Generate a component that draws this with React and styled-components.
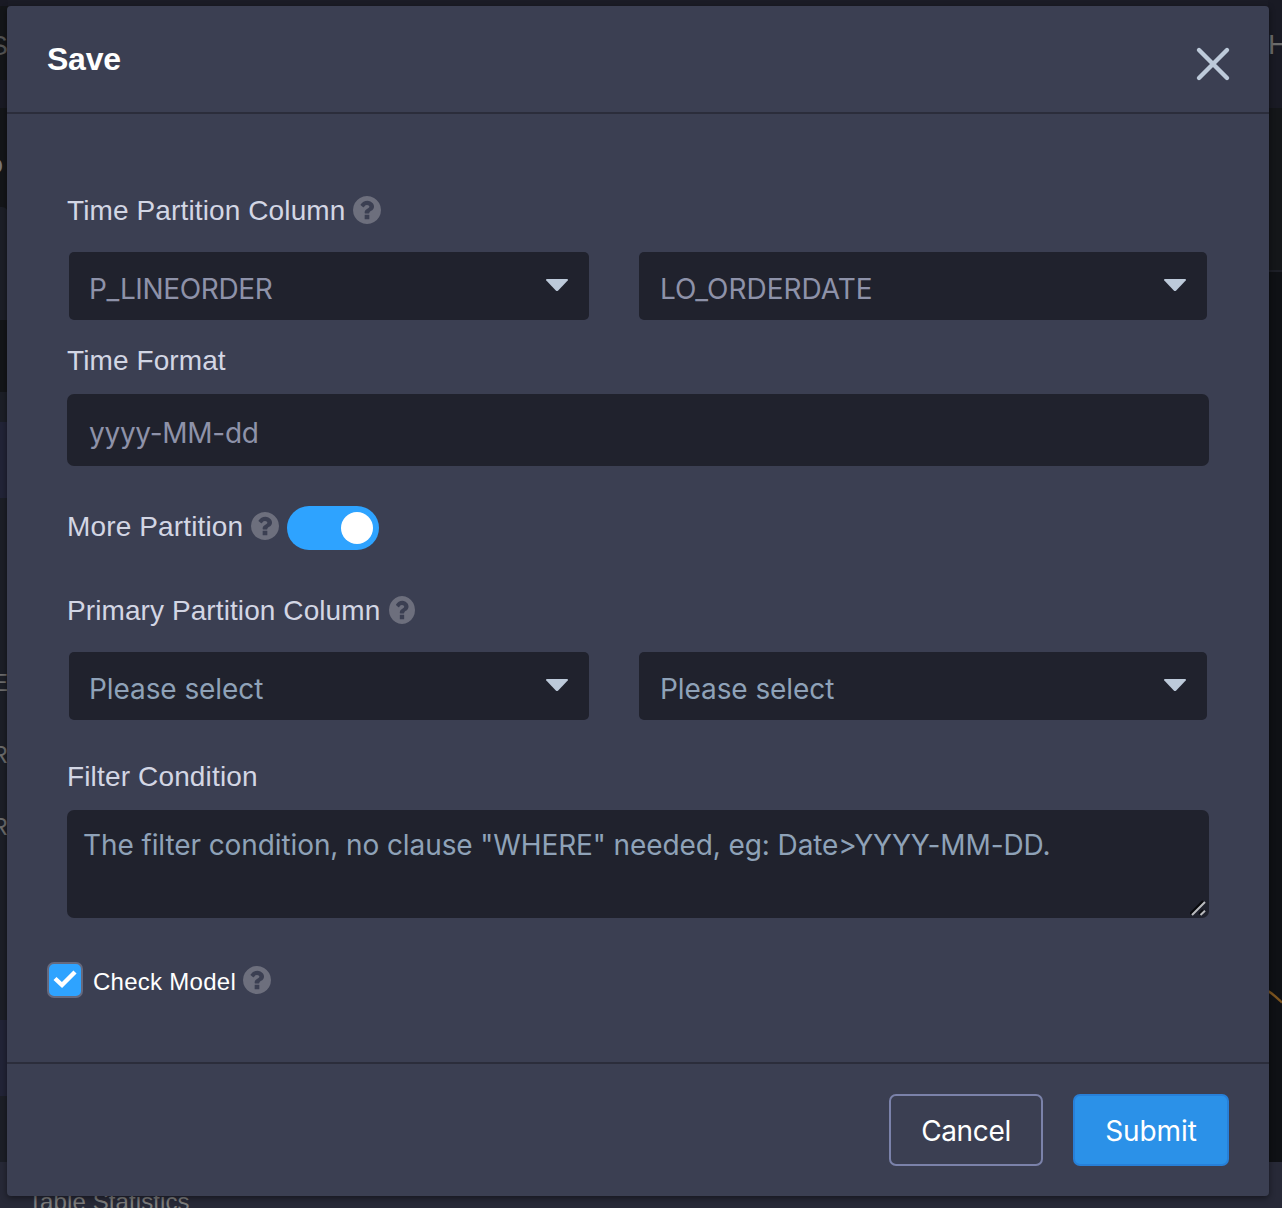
import React from "react";
import styled, { createGlobalStyle } from "styled-components";

const Global = createGlobalStyle`
  *, *::before, *::after { box-sizing: border-box; }
  body { margin: 0; background: #14161a; overflow: hidden; }
  button, input, textarea { font: inherit; margin: 0; }
`;

const sans = `"Liberation Sans", Helvetica, Arial, sans-serif`;
const ui = `Inter, "Noto Sans", sans-serif`;

const Screen = styled.div`
  position: relative;
  width: 1282px;
  height: 1208px;
  overflow: hidden;
  display: flex;
  flex-direction: column;
  background: #1b1c26;
  font-family: ${sans};
`;

const Workspace = styled.div`
  height: 1162px;
  display: flex;
  justify-content: space-between;
`;

const Rail = styled.div`
  width: ${(p) => p.$width}px;
  display: flex;
  flex-direction: column;
  overflow: hidden;
  background: #141619;
`;

const Band = styled.div`
  flex: 0 0 ${(p) => p.$h}px;
  height: ${(p) => p.$h}px;
  background: ${(p) => p.$bg};
  border-top-right-radius: ${(p) => p.$radius || 0}px;
  display: flex;
  align-items: center;
  justify-content: ${(p) => p.$align || "flex-end"};
  padding-top: ${(p) => p.$drop || 0}px;
  padding-right: ${(p) => p.$inset || 0}px;
  overflow: hidden;
  color: ${(p) => p.$color || "#6c6c6c"};
  font-size: ${(p) => p.$size || 28}px;
  line-height: 1;
  white-space: nowrap;
`;

const StatusBar = styled.div`
  height: 46px;
  background: #272937;
  padding: 26px 0 0 28px;
  color: #7d7d7d;
  font-size: 24px;
  line-height: 28px;
  letter-spacing: 0.1px;
`;

const Dialog = styled.section`
  position: absolute;
  left: 7px;
  top: 6px;
  width: 1262px;
  height: 1190px;
  display: flex;
  flex-direction: column;
  background: #3b3f52;
  border-radius: 4px;
  box-shadow: 0 2px 6px rgba(0, 0, 0, 0.45);
`;

const Header = styled.header`
  flex: 0 0 108px;
  display: flex;
  justify-content: space-between;
  align-items: flex-start;
  padding: 33px 38px 0 40px;
  border-bottom: 2px solid #2b2d3b;
`;

const Title = styled.h1`
  margin: 0;
  color: #fff;
  font: bold 32px/40px ${sans};
  letter-spacing: -0.25px;
`;

const CloseButton = styled.button`
  display: flex;
  padding: 7px 0 0;
  border: 0;
  background: none;
`;

const Body = styled.main`
  flex: 1;
  display: flex;
  flex-direction: column;
  padding: 80px 60px 0;
`;

const LabelRow = styled.div`
  display: flex;
  align-items: center;
  gap: ${(p) => p.$gap || 8}px;
  height: ${(p) => p.$h || 34}px;
  margin-top: ${(p) => p.$mt || 0}px;
`;

const Label = styled.span`
  color: #d3d6e4;
  font-size: 28px;
  line-height: 34px;
  white-space: nowrap;
  letter-spacing: ${(p) => p.$ls || 0.1}px;
`;

const HelpIcon = styled.svg`
  display: block;
  flex: none;
  margin-top: ${(p) => p.$shift ?? -2}px;
`;

const SelectRow = styled.div`
  display: grid;
  grid-template-columns: 520px 568px;
  column-gap: 50px;
  padding-left: 2px;
  margin-top: ${(p) => p.$mt}px;
`;

const Select = styled.div`
  height: 68px;
  display: flex;
  align-items: center;
  justify-content: space-between;
  padding: 6px 20px 0 ${(p) => p.$pl || 20}px;
  border-radius: 5px;
  background: #20222d;
  color: ${(p) => (p.$placeholder ? "#8fa2b8" : "#8e92a9")};
  font: 28px/36px ${ui};
`;

const Value = styled.span`
  letter-spacing: ${(p) => p.$ls || 0}px;
`;

const CaretIcon = styled.svg`
  display: block;
  margin-top: -8px;
`;

const FormatInput = styled.input`
  height: 72px;
  margin-top: 16px;
  padding: 5px 22px 0;
  border: 0;
  border-radius: 7px;
  outline: 0;
  background: #20222d;
  color: #8e92a9;
  &&& { font: 28px/36px ${ui}; }
  letter-spacing: -0.28px;
`;

const FilterBox = styled.div`
  position: relative;
  height: 108px;
  margin-top: 16px;
  display: flex;
`;

const FilterInput = styled.textarea`
  flex: 1;
  padding: 17px 16px;
  border: 0;
  border-radius: 7px;
  outline: 0;
  resize: none;
  overflow: hidden;
  background: #20222d;
  &&& { font: 28px/36px ${ui}; }
  letter-spacing: -0.1px;
  &::placeholder { color: #8fa2b8; opacity: 1; }
`;

const Grip = styled.svg`
  position: absolute;
  right: 3px;
  bottom: 1px;
`;

const Switch = styled.span`
  width: 92px;
  height: 44px;
  padding: 6px;
  margin-top: 2px;
  border-radius: 22px;
  background: #2ea3ff;
  display: flex;
  justify-content: flex-end;
`;

const Knob = styled.span`
  width: 32px;
  height: 32px;
  border-radius: 50%;
  background: #fff;
`;

const CheckRow = styled.div`
  display: flex;
  align-items: center;
  height: 36px;
  margin: 44px 0 0 -20px;
`;

const CheckBox = styled.span`
  width: 36px;
  height: 36px;
  display: flex;
  align-items: center;
  justify-content: center;
  border: 2px solid #65697e;
  border-radius: 7px;
  background: #2ea3ff;
`;

const CheckLabel = styled.span`
  margin: 4px 7px 0 10px;
  color: #fff;
  font-size: 24px;
  line-height: 30px;
  letter-spacing: 0.27px;
`;

const Footer = styled.footer`
  flex: 0 0 134px;
  display: flex;
  justify-content: flex-end;
  align-items: flex-start;
  gap: 30px;
  padding: 30px 40px 0;
  border-top: 2px solid #2b2d3b;
`;

const Button = styled.button`
  width: ${(p) => p.$w}px;
  height: 72px;
  padding: 2px 0 0;
  border: 2px solid ${(p) => (p.$primary ? "#2780d9" : "#7b82aa")};
  border-radius: 7px;
  background: ${(p) => (p.$primary ? "#2b91e8" : "transparent")};
  color: #fff;
  &&& { font: 28px/36px ${ui}; }
  letter-spacing: ${(p) => p.$ls || 0}px;
`;

const Help = ({ width = 28, shift }) => (
  <HelpIcon $shift={shift} width={width} height="28" viewBox="128 128 1536 1536" preserveAspectRatio="none">
    <path
      fill="#6d6f7d"
      d="M1024 1376v-192q0-14-9-23t-23-9h-192q-14 0-23 9t-9 23v192q0 14 9 23t23 9h192q14 0 23-9t9-23zm256-672q0-88-55.5-163t-138.5-116-170-41q-243 0-371 213-15 24 8 42l132 100q7 6 19 6 16 0 25-12 53-68 86-92 34-24 86-24 48 0 85.5 26t37.5 59q0 38-20 61t-68 45q-63 28-115.5 86.5t-52.5 125.5v36q0 14 9 23t23 9h192q14 0 23-9t9-23q0-19 21.5-49.5t54.5-49.5q32-18 49-28.5t46-35 44.5-48 28-60.5 12.5-81zm384 192q0 209-103 385.5t-279.5 279.5-385.5 103-385.5-103-279.5-279.5-103-385.5 103-385.5 279.5-279.5 385.5-103 385.5 103 279.5 279.5 103 385.5z"
    />
  </HelpIcon>
);

const Caret = () => (
  <CaretIcon width="24" height="14" viewBox="0 0 24 14">
    <path d="M1.8 1H22.2Q23.6 1 22.7 2.5L13.2 12.5Q12 13.6 10.8 12.5L1.3 2.5Q.4 1 1.8 1Z" fill="#bdcada" />
  </CaretIcon>
);

const leftBands = [
  { h: 6, bg: "#191a24" },
  { h: 74, bg: "#141619", text: "S", drop: 6, size: 28, color: "#555" },
  { h: 28, bg: "#191a24" },
  { h: 99, bg: "#141619", text: "o", drop: 12, inset: 5, size: 26, color: "#777" },
  { h: 113, bg: "#1c1f27", radius: 6 },
  { h: 72, bg: "#141619" },
  { h: 30, bg: "#1c1f27" },
  { h: 76, bg: "#222437" },
  { h: 148, bg: "#1c1f27" },
  { h: 72, bg: "#1c1f27", text: "E", drop: 2 },
  { h: 72, bg: "#1c1f27", text: "R", drop: 2 },
  { h: 72, bg: "#1c1f27", text: "R", drop: 2 },
  { h: 158, bg: "#1c1f27" },
  { h: 76, bg: "#222437" },
  { h: 66, bg: "#1c1f27" },
];

export default function App() {
  return (
    <>
      <Global />
      <Screen>
        <Workspace>
          <Rail $width={8}>
            {leftBands.map((b, i) => (
              <Band key={i} $h={b.h} $bg={b.bg} $size={b.size || 24} $drop={b.drop} $inset={b.inset} $radius={b.radius} $color={b.color}>
                {b.text}
              </Band>
            ))}
          </Rail>
          <Rail $width={14}>
            <Band $h={88} $bg="#191a24" $align="flex-start" $size={28} $drop={1}>H</Band>
            <Band $h={20} $bg="#191a24" />
            <Band $h={162} $bg="#141619" />
            <Band $h={2} $bg="#1d1f27" />
            <Band $h={718} $bg="#0f1115" />
            <Band $h={172} $bg="#0f1115" $align="flex-start">
              <svg width="14" height="172" viewBox="0 0 14 172">
                <path d="M0 1C5 4 9 8 14 12.5" fill="none" stroke="#7d5520" strokeWidth="2.4" />
              </svg>
            </Band>
          </Rail>
        </Workspace>
        <StatusBar>Table Statistics</StatusBar>

        <Dialog>
          <Header>
            <Title>Save</Title>
            <CloseButton aria-label="Close">
              <svg width="36" height="36" viewBox="0 0 36 36">
                <path d="M4 4L32 32M32 4L4 32" stroke="#bdcada" strokeWidth="4.4" strokeLinecap="round" />
              </svg>
            </CloseButton>
          </Header>
          <Body>
            <LabelRow>
              <Label $ls={0.12}>Time Partition Column</Label>
              <Help />
            </LabelRow>
            <SelectRow $mt={24}>
              <Select><Value $ls={-0.36}>P_LINEORDER</Value><Caret /></Select>
              <Select $pl={21}><Value>LO_ORDERDATE</Value><Caret /></Select>
            </SelectRow>
            <LabelRow $mt={24}><Label>Time Format</Label></LabelRow>
            <FormatInput defaultValue="yyyy-MM-dd" />
            <LabelRow $mt={38} $h={46}>
              <Label $ls={0.14}>More Partition</Label>
              <Help />
              <Switch><Knob /></Switch>
            </LabelRow>
            <LabelRow $mt={44} $gap={9}>
              <Label $ls={0.09}>Primary Partition Column</Label>
              <Help width={26} />
            </LabelRow>
            <SelectRow $mt={24}>
              <Select $placeholder><Value $ls={-0.08}>Please select</Value><Caret /></Select>
              <Select $placeholder $pl={21}><Value $ls={-0.08}>Please select</Value><Caret /></Select>
            </SelectRow>
            <LabelRow $mt={40}><Label $ls={0.15}>Filter Condition</Label></LabelRow>
            <FilterBox>
              <FilterInput placeholder={'The filter condition, no clause "WHERE" needed, eg: Date>YYYY-MM-DD.'} />
              <Grip width="16" height="17" viewBox="0 0 16 17">
                <path d="M0 14L13 1M9 14L13 10" stroke="#08090c" strokeWidth="2" />
                <path d="M2 15L15 2M10.5 15L15 10.8" stroke="#b9babd" strokeWidth="2" />
              </Grip>
            </FilterBox>
            <CheckRow>
              <CheckBox>
                <svg width="24" height="20" viewBox="0 0 24 20">
                  <path d="M2 8.5L9 15L22 2" fill="none" stroke="#fff" strokeWidth="4.4" />
                </svg>
              </CheckBox>
              <CheckLabel>Check Model</CheckLabel>
              <Help shift={0} />
            </CheckRow>
          </Body>
          <Footer>
            <Button $w={154} $ls={-0.35}>Cancel</Button>
            <Button $w={156} $ls={-0.1} $primary>Submit</Button>
          </Footer>
        </Dialog>
      </Screen>
    </>
  );
}
